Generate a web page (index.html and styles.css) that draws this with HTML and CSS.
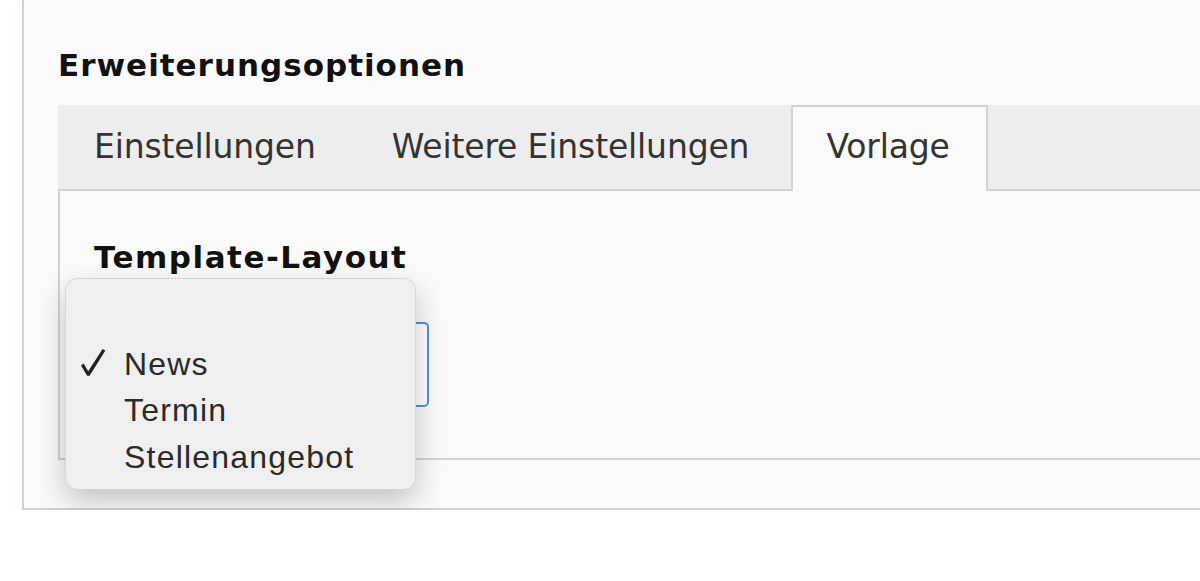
FILE: index.html
```html
<!DOCTYPE html>
<html lang="de">
<head>
<meta charset="utf-8">
<title>Erweiterungsoptionen</title>
<link rel="stylesheet" href="styles.css">
</head>
<body>
<div class="panel">
  <h2 class="section-title">Erweiterungsoptionen</h2>
  <div class="tabs">
    <div class="tab-bar">
      <div class="tab">Einstellungen</div>
      <div class="tab">Weitere Einstellungen</div>
      <div class="tab active">Vorlage</div>
    </div>
    <div class="tab-content">
      <label class="field-label">Template-Layout</label>
      <div class="select-wrap">
        <div class="select"></div>
        <ul class="menu">
          <li class="menu-item empty">&nbsp;</li>
          <li class="menu-item checked"><svg class="check" viewBox="0 0 26 29" width="26" height="29"><path d="M1 17.5 L3.6 15.6 L8.2 23.2 L22.6 1 L25.4 2.4 L9.6 27.8 L7.2 27.8 Z" fill="#222"/></svg>News</li>
          <li class="menu-item">Termin</li>
          <li class="menu-item">Stellenangebot</li>
        </ul>
      </div>
    </div>
  </div>
</div>
</body>
</html>
```

FILE: styles.css
```css
html, body {
  margin: 0;
  padding: 0;
  background: #ffffff;
  overflow: hidden;
}

body {
  font-family: "DejaVu Sans", Verdana, sans-serif;
  color: #1a1a1a;
}

.panel {
  margin-left: 22px;
  width: 1200px;
  background: #fafafa;
  border-left: 2px solid #d2d2d2;
  border-bottom: 2px solid #d2d2d2;
  padding: 44px 0 48px 34px;
  box-shadow: 0 8px 20px rgba(0, 0, 0, 0.04);
}

.section-title {
  margin: 0;
  font-size: 31px;
  font-weight: bold;
  letter-spacing: 1px;
  line-height: 42px;
  color: #111;
}

.tabs {
  margin-top: 19px;
}

.tab-bar {
  display: flex;
  height: 84px;
  background: #ededed;
  border-bottom: 2px solid #d2d2d2;
}

.tab {
  padding: 0 37px 0 36px;
  margin-right: 3px;
  font-size: 33px;
  letter-spacing: -0.15px;
  line-height: 84px;
  color: #333;
  white-space: nowrap;
}

.tab.active {
  background: #fafafa;
  border: 2px solid #d2d2d2;
  border-bottom: none;
  border-radius: 2px 2px 0 0;
  margin-bottom: -2px;
  margin-left: 2px;
  padding: 0 36px 0 33px;
  line-height: 80px;
}

.tab-content {
  position: relative;
  background: #fafafa;
  border-left: 2px solid #d2d2d2;
  border-bottom: 2px solid #d2d2d2;
  height: 267px;
  padding-left: 34px;
}

.field-label {
  display: block;
  padding-top: 45px;
  font-size: 31px;
  font-weight: bold;
  letter-spacing: 1.5px;
  line-height: 42px;
  color: #111;
}

.select-wrap {
  position: relative;
  margin-top: 44px;
}

.select {
  width: 331px;
  height: 81px;
  border: 2px solid #4d94dc;
  border-radius: 5px;
  background: #fff;
}

.menu {
  position: absolute;
  left: -29px;
  top: -44px;
  width: 349px;
  margin: 0;
  padding: 15px 0 9px;
  list-style: none;
  background: #efefef;
  border: 1px solid #d6d6d6;
  border-radius: 12px;
  box-shadow: 0 12px 30px rgba(0, 0, 0, 0.22);
  font-family: "Liberation Sans", Arial, sans-serif;
  font-size: 32px;
  letter-spacing: 1.2px;
  color: #2a2a2a;
}

.menu-item {
  position: relative;
  height: 46.5px;
  line-height: 46.5px;
  padding-left: 58px;
  white-space: nowrap;
}

.check {
  position: absolute;
  left: 14px;
  top: 7px;
}
```
